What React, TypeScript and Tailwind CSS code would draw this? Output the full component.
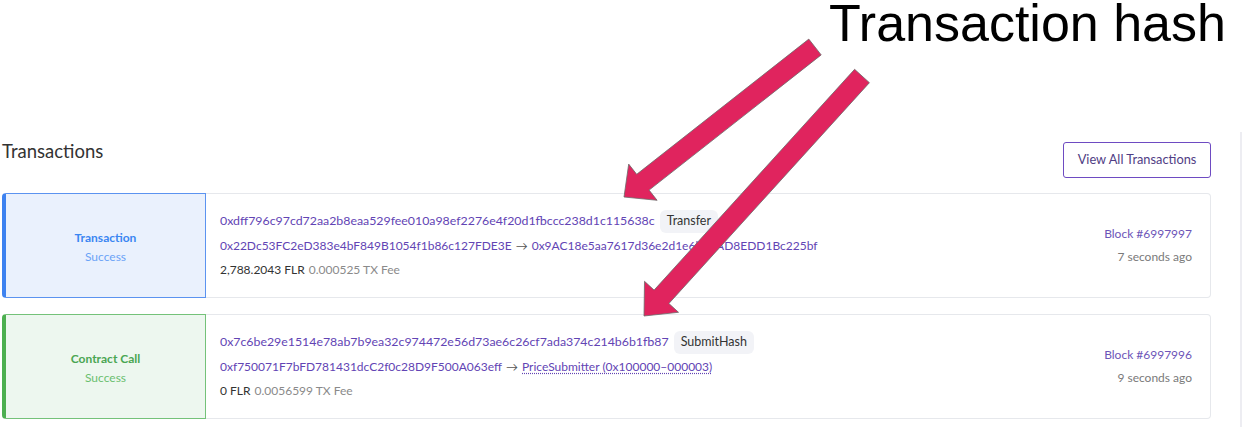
import React from 'react';

type Tx = {
  kind: string;
  hash: string;
  badge: string;
  from: string;
  to: string;
  toIsContract?: boolean;
  amount: string;
  fee: string;
  block: string;
  ago: string;
  tone: 'blue' | 'green';
};

const txs: Tx[] = [
  {
    kind: 'Transaction',
    hash: '0xdff796c97cd72aa2b8eaa529fee010a98ef2276e4f20d1fbccc238d1c115638c',
    badge: 'Transfer',
    from: '0x22Dc53FC2eD383e4bF849B1054f1b86c127FDE3E',
    to: '0x9AC18e5aa7617d36e2d1e6b49AD8EDD1Bc225bf',
    amount: '2,788.2043 FLR',
    fee: '0.000525 TX Fee',
    block: 'Block #6997997',
    ago: '7 seconds ago',
    tone: 'blue',
  },
  {
    kind: 'Contract Call',
    hash: '0x7c6be29e1514e78ab7b9ea32c974472e56d73ae6c26cf7ada374c214b6b1fb87',
    badge: 'SubmitHash',
    from: '0xf750071F7bFD781431dcC2f0c28D9F500A063eff',
    to: 'PriceSubmitter (0x100000–000003)',
    toIsContract: true,
    amount: '0 FLR',
    fee: '0.0056599 TX Fee',
    block: 'Block #6997996',
    ago: '9 seconds ago',
    tone: 'green',
  },
];

const TxCard: React.FC<{ tx: Tx }> = ({ tx }) => {
  const blue = tx.tone === 'blue';
  return (
    <div className="flex">
      <div
        className={
          blue
            ? 'w-[204px] flex flex-col items-center justify-center gap-[3px] rounded-l-[4px] border border-l-4 border-[#5b93f0] border-l-[#3d82f0] bg-[#eaf1fd] pt-[4px]'
            : 'w-[204px] flex flex-col items-center justify-center gap-[3px] rounded-l-[4px] border border-l-4 border-[#74c279] border-l-[#4caf50] bg-[#edf7ef] pt-[4px]'
        }
      >
        <span className={blue ? 'text-[12px] leading-4 font-bold text-[#3a86f2]' : 'text-[12px] leading-4 font-bold text-[#4aa652]'}>
          {tx.kind}
        </span>
        <span className={blue ? 'text-[12px] leading-4 text-[#6aa3f7]' : 'text-[12px] leading-4 text-[#6bbf70]'}>Success</span>
      </div>
      <div className="flex-1 flex items-center justify-between rounded-r-[4px] border border-l-0 border-[#e6e8ec] bg-white pl-[14px] pr-[18px] h-[105px]">
        <div className="flex flex-col text-[12px]">
          <div className="flex items-center h-6 gap-[5px]">
            <span className="text-[12.35px] text-[#6244b4]">{tx.hash}</span>
            <span className="h-[23px] px-[7px] flex items-center rounded-[6px] bg-[#f2f3f7] text-[12.5px] text-[#333]">{tx.badge}</span>
          </div>
          <div className="flex items-center h-6 text-[#6244b4]">
            <span>{tx.from}</span>
            <span className="mx-[4px] text-[#555]">→</span>
            <span className={tx.toIsContract ? 'underline decoration-dotted underline-offset-2' : ''}>{tx.to}</span>
          </div>
          <div className="flex items-center h-6">
            <span className="text-[#333]">{tx.amount}</span>
            <span className="ml-[4px] text-[#8a8a8a]">{tx.fee}</span>
          </div>
        </div>
        <div className="flex flex-col items-end gap-[7px] text-[12px]">
          <span className="text-[#6d55b8] leading-4">{tx.block}</span>
          <span className="text-[#7a7a7a] leading-4">{tx.ago}</span>
        </div>
      </div>
    </div>
  );
};

export default function App() {
  return (
    <div className="relative w-[1243px] h-[427px] overflow-hidden bg-white font-['Lato','Open_Sans',sans-serif]">
      <div className="h-[132px]" />
      <section className="w-[1242px] h-[295px] border-r-2 border-[#ededf2] pl-[2px] pr-[29px]">
        <div className="flex items-start justify-between pt-[10px]">
          <h2 className="text-[18.5px] leading-[18px] text-[#333]">Transactions</h2>
          <button className="h-[36px] w-[148px] rounded-[3px] border border-[#6e4bc2] text-[12.8px] text-[#4f3d84]">
            View All Transactions
          </button>
        </div>
        <div className="mt-[15px] flex flex-col gap-[16px]">
          {txs.map((tx) => (
            <TxCard key={tx.hash} tx={tx} />
          ))}
        </div>
      </section>

      {/* annotation */}
      <div className="absolute left-[829px] top-0 text-[52px] leading-[46px] text-black font-['Liberation_Sans',Arial,sans-serif]">
        Transaction hash
      </div>
      <svg className="absolute inset-0 w-full h-full pointer-events-none" viewBox="0 0 1243 427">
        <polygon
          points="821.2,54.9 808.8,39.1 636.7,174.3 628.7,164.1 624,197 657.1,200.3 649.1,190.1"
          fill="#e0245e"
          stroke="#6b6b6b"
          strokeWidth="0.8"
        />
        <polygon
          points="869.4,82.7 854.6,69.3 654.1,290.1 644.5,281.3 644,316 678.5,312.3 668.9,303.5"
          fill="#e0245e"
          stroke="#6b6b6b"
          strokeWidth="0.8"
        />
      </svg>
    </div>
  );
}
